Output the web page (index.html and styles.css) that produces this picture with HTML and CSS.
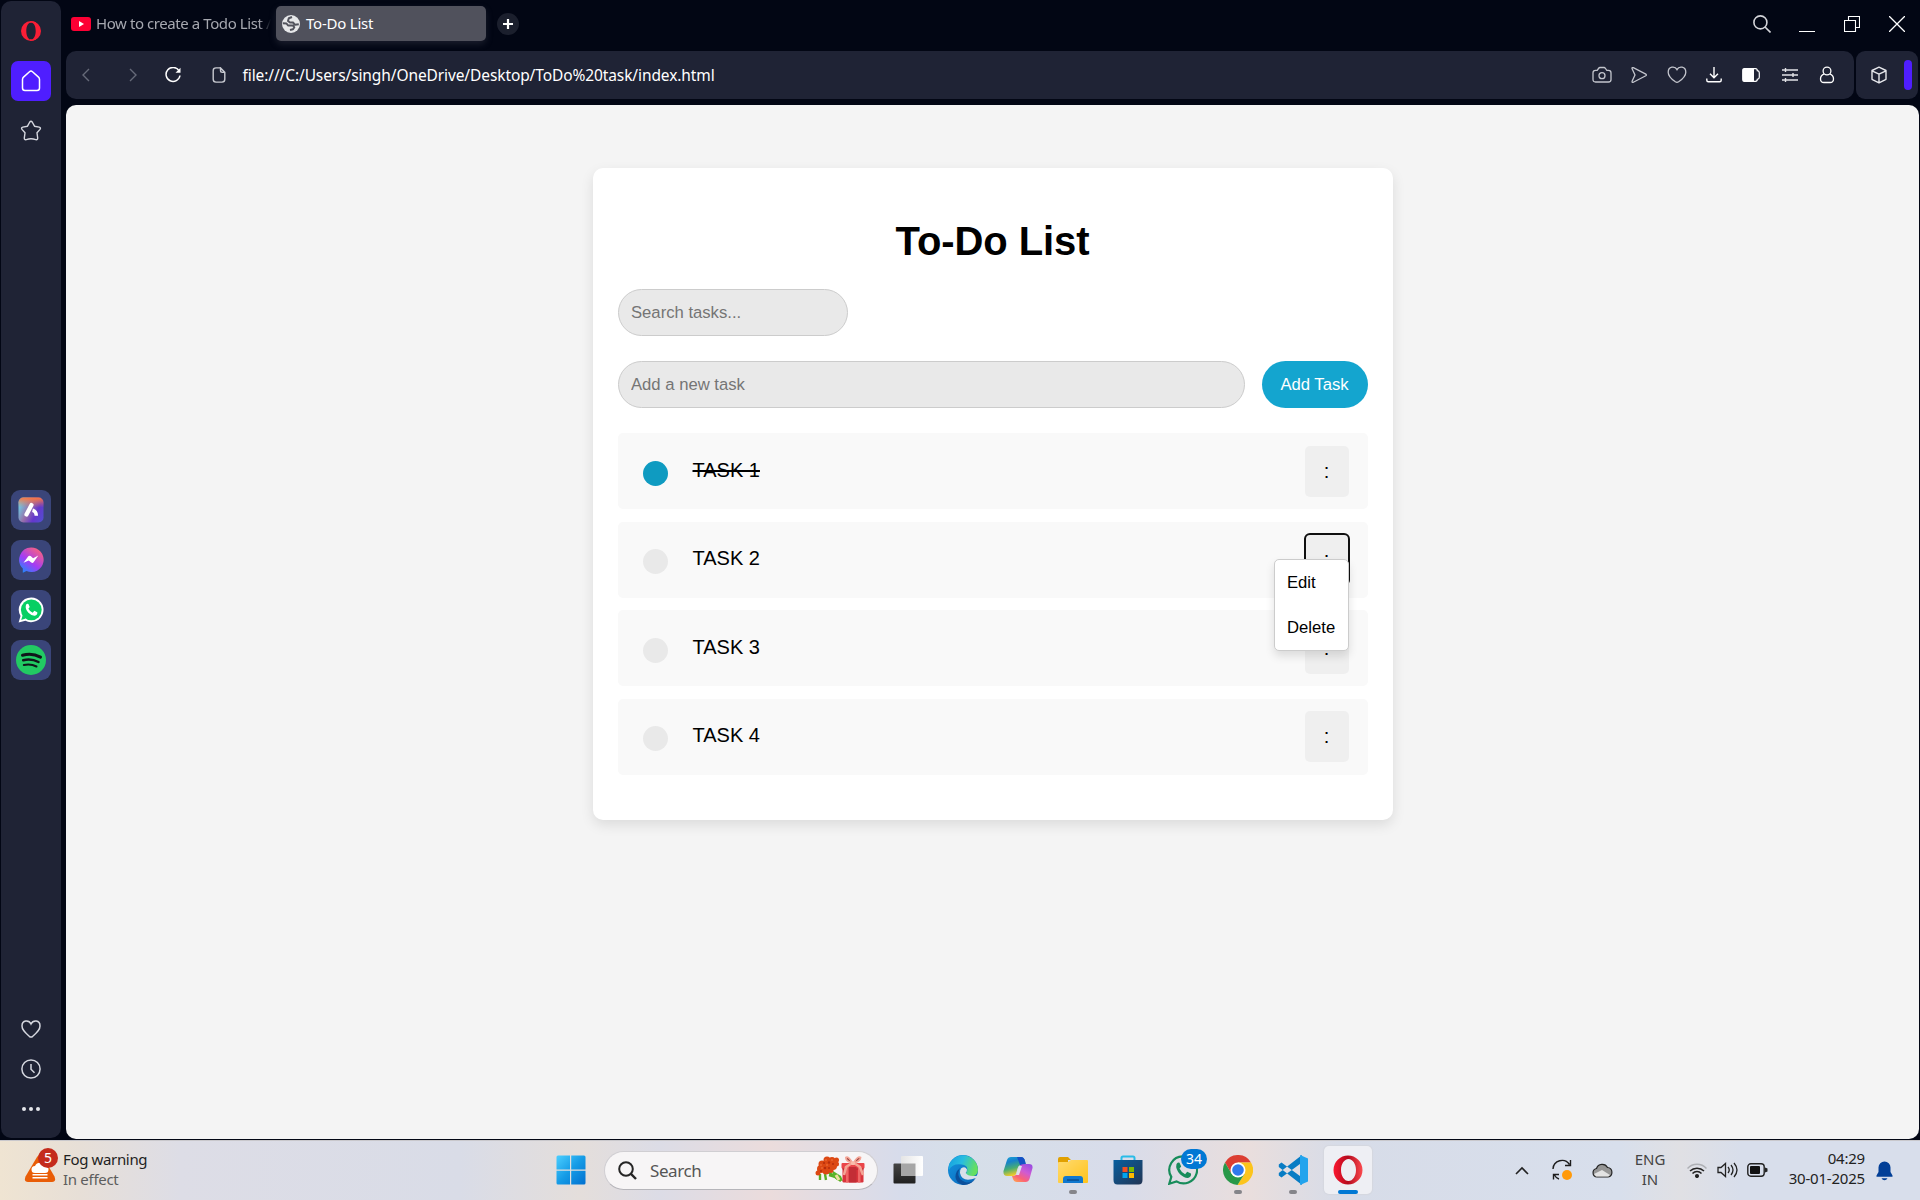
FILE: index.html
```html
<!DOCTYPE html>
<html lang="en">
<head>
<meta charset="utf-8">
<title>To-Do List</title>
<link rel="stylesheet" href="styles.css">
</head>
<body>
<div class="browser">
  <aside class="sidebar">
    <svg class="opera-mark" width="20" height="20" viewBox="0 0 20 20"><path fill="#fa1e36" fill-rule="evenodd" d="M10 0a10 10 0 1 0 0 20a10 10 0 0 0 0-20zM10 1.400c2.900 0 4.700 3.900 4.700 8.600s-1.800 8.600-4.700 8.600s-4.700-3.900-4.700-8.600s1.800-8.600 4.700-8.600z"/><path d="M9 1.200q3-1.200 6 .9M9 18.800q3 1.200 6-.9" stroke="#fa1e36" fill="none"/></svg>
    <div class="side-button home"><svg width="20" height="22" viewBox="0 0 20 22" fill="none" stroke="#fff" stroke-width="1.500" stroke-linejoin="round"><path d="M1.500 9.500q0-1.500 1-2.400L8.500 1.700q1.500-1.300 3 0l6 5.400q1 .9 1 2.400v8.500q0 2.500-2.500 2.500H4q-2.500 0-2.500-2.500z"/></svg></div>
    <svg class="star" width="22" height="22" viewBox="0 0 22 22" fill="none" stroke="#d5d7df" stroke-width="1.400" stroke-linejoin="round"><path d="M9.800 2Q11 .4 12.200 2l2.300 4.200 4.700.9q2 .6.8 2.300l-3 3.400.7 5.200q0 2.200-2 1.600Q11 18 6.300 19.600q-2 .6-2-1.600l.7-5.200L2 9.400Q.8 7.700 2.800 7.100l4.700-.9z"/></svg>
    <div class="side-apps">
      <div class="side-button"><svg width="26" height="26" viewBox="0 0 26 26"><defs><linearGradient id="aria" x1="0" y1=".3" x2="1" y2=".8"><stop offset="0" stop-color="#6dd3e8"/><stop offset=".4" stop-color="#976ea9"/><stop offset=".7" stop-color="#6537cc"/><stop offset="1" stop-color="#554bd0"/></linearGradient><linearGradient id="ariatop" x1="0" y1="0" x2="0" y2="1"><stop offset="0" stop-color="#ff753e"/><stop offset=".4" stop-color="#e87557" stop-opacity="0"/></linearGradient></defs><rect x=".5" y=".5" width="25" height="25" rx="5" fill="url(#aria)"/><rect x=".5" y=".5" width="25" height="25" rx="5" fill="url(#ariatop)"/><path d="M13.500 8L8.500 17.500" stroke="#fff" stroke-width="4.200" stroke-linecap="round"/><path d="M14.500 13.200q3.800.9 3.800 5.600" stroke="#fff" stroke-width="3.500" fill="none"/></svg></div>
      <div class="side-button"><svg width="26" height="26" viewBox="0 0 26 26"><defs><linearGradient id="msg" x1=".1" y1="1" x2=".8" y2="0"><stop stop-color="#168fff"/><stop offset=".45" stop-color="#a43bf5"/><stop offset="1" stop-color="#ff6577"/></linearGradient></defs><path fill="url(#msg)" d="M13 .5a12.300 12.300 0 1 1-4.500 23.600L4.800 25.700V21.500A12.300 12.300 0 0 1 13 .5z"/><path fill="#fff" d="M5.500 15.800l4.800-6.500q1-1.200 2.300-.2l2.500 2.100 5.200-2.700-4.700 6.800q-1 1.200-2.300.2l-2.600-2z"/></svg></div>
      <div class="side-button"><svg width="26" height="26" viewBox="0 0 26 26"><path fill="#fff" d="M13.300.4a12.400 12.400 0 1 1-5.900 23.400L.6 25.500l1.900-6.500A12.400 12.400 0 0 1 13.300.4z"/><circle cx="13.300" cy="12.800" r="10.400" fill="#07cf63"/><path fill="#07cf63" d="M3.200 23l1.500-5 3 3.500z"/><path fill="#fff" d="M8 7.700q1-1.400 2.400-.8l1.300 3-1.300 1.800q1.500 2.900 4.300 4l1.600-1.900 3 1.500q.4 2.700-2.500 3.400-3 .3-6.400-3Q6.800 12 8 7.700z"/></svg></div>
      <div class="side-button"><svg width="30" height="30" viewBox="0 0 30 30"><circle cx="15" cy="15" r="15" fill="#22ca63"/><g fill="none" stroke="#10151a" stroke-linecap="round"><path d="M6.500 10.300q9.500-2.600 18 1.800" stroke-width="3"/><path d="M7.200 15.300q8-2 15.300 1.700" stroke-width="2.500"/><path d="M7.800 20q7-1.500 12.700 1.500" stroke-width="2"/></g></svg></div>
    </div>
    <div class="side-tools">
      <svg width="20" height="18" viewBox="0 0 20 18" fill="none" stroke="#d5d7df" stroke-width="1.500"><path d="M10 4C8-.2 1-.3 1 5.900 1 9.900 4 12.400 8.300 16.300q1.700 1.400 3.400 0C16 12.400 19 9.900 19 5.900 19-.3 12-.2 10 4z"/></svg>
      <svg width="20" height="20" viewBox="0 0 20 20" fill="none" stroke="#d5d7df" stroke-width="1.500"><circle cx="10" cy="10" r="9.100"/><path d="M10 5v5.200l3.500 3.500"/></svg>
      <svg width="20" height="6" viewBox="0 0 20 6" fill="#e4e5ea"><circle cx="3" cy="3" r="2"/><circle cx="10" cy="3" r="2"/><circle cx="17" cy="3" r="2"/></svg>
    </div>
  </aside>

  <div class="window">
    <header class="tabs">
      <div class="tab">
        <svg width="20" height="14" viewBox="0 0 20 14"><rect width="20" height="14" rx="3" fill="#fd0034"/><path fill="#fff" d="M8 4l5 3-5 3z"/></svg>
        <span class="tab-label first">How to create a Todo List /</span>
      </div>
      <div class="tab active">
        <svg width="18" height="18" viewBox="0 0 18 18"><circle cx="9" cy="9" r="9" fill="#e6e7e9"/><path fill="none" stroke="#52535d" stroke-width="2" stroke-linejoin="round" d="M.8 8.200l3.700.3L6 10.500h5l1.300 1.800-1.300 2-3 .7M10 2L6.800 3.300 6 6l2 1.500h3l2 2.300 3.800-.6"/></svg>
        <span class="tab-label second">To-Do List</span>
      </div>
      <div class="new-tab"><svg width="10" height="10" viewBox="0 0 10 10"><path d="M5 0v10M0 5h10" stroke="#fff" stroke-width="2.200"/></svg></div>
      <div class="window-controls">
        <svg width="18" height="18" viewBox="0 0 18 18" fill="none" stroke="#d3d4d9" stroke-width="1.600"><circle cx="7.400" cy="7.400" r="6.500"/><path d="M12 12l5.500 5.500"/></svg>
        <svg width="16" height="16" viewBox="0 0 16 16"><path d="M0 15.500h16" stroke="#fff"/></svg>
        <svg width="16" height="16" viewBox="0 0 16 16" fill="none" stroke="#fff" stroke-width="1.100"><path d="M.5 4.500h11v11H.5zM4.500 4.500v-4h11v11h-4"/></svg>
        <svg width="16" height="16" viewBox="0 0 16 16"><path d="M0 0l16 16M16 0L0 16" stroke="#fff" stroke-width="1.300"/></svg>
      </div>
    </header>

    <div class="toolbar">
      <div class="address-bar">
        <div class="nav">
          <svg width="8" height="14" viewBox="0 0 8 14" fill="none" stroke="#666a79" stroke-width="1.400"><path d="M7 1L1 7l6 6"/></svg>
          <svg width="8" height="14" viewBox="0 0 8 14" fill="none" stroke="#666a79" stroke-width="1.400"><path d="M1 1l6 6-6 6"/></svg>
          <svg width="16" height="16" viewBox="0 0 16 16"><path d="M14 3.700A7 7 0 1 0 15 8.500" fill="none" stroke="#fff" stroke-width="1.500"/><path fill="#fff" d="M15.500.8v5h-5z"/></svg>
          <svg width="14" height="16" viewBox="0 0 14 16" fill="none" stroke="#c7c9d0" stroke-width="1.400"><path d="M8.500.9H4Q1.200.9 1.200 3.700v8.600q0 2.800 2.800 2.800h6q2.800 0 2.800-2.800V5.400L8.500.9v2.700q0 1.800 1.800 1.800h2.500"/></svg>
        </div>
        <span class="url">file:///C:/Users/singh/OneDrive/Desktop/ToDo%20task/index.html</span>
        <div class="actions">
          <svg width="20" height="18" viewBox="0 0 20 18" fill="none" stroke="#c3c5cd" stroke-width="1.300"><path d="M3.500 4.300h1.700L6.500 2.500Q7.200 1.500 8 1.500h4q.8 0 1.500 1l1.300 1.800h1.700q2.500 0 2.500 2.500v6.700q0 2.500-2.500 2.500h-13Q1 16 1 13.500V6.800q0-2.500 2.500-2.500z"/><circle cx="10" cy="9.700" r="3"/></svg>
          <svg width="18" height="18" viewBox="0 0 18 18" fill="none" stroke="#c3c5cd" stroke-width="1.300" stroke-linejoin="round"><path d="M2 2.500q0-1.300 1.300-.8l12.500 6.400q1.200.8 0 1.600L3.300 16.300q-1.500.5-1.200-1L5 9z"/></svg>
          <svg width="20" height="18" viewBox="0 0 20 18" fill="none" stroke="#c3c5cd" stroke-width="1.300"><path d="M10 3.600C8-.2 1.200.2 1.200 6.200c0 3.800 3 6.700 7.200 9.600q1.600 1 3.200 0c4.200-2.900 7.200-5.800 7.200-9.600C18.800.2 12-.2 10 3.600z"/></svg>
          <svg width="16" height="16" viewBox="0 0 16 16" fill="none" stroke="#fff" stroke-width="1.400"><path d="M8 0v10.500M4 6.700l4 4 4-4M.8 11.500v1.800q0 1.500 1.500 1.500h11.400q1.500 0 1.500-1.500v-1.800"/></svg>
          <svg class="battery-saver" width="18" height="14" viewBox="0 0 18 14"><path d="M2.200.7h11.300q1.800 0 1.800 2 2 .3 2 2v4.600q0 1.700-2 2 0 2-1.800 2H2.200Q.7 13.300.7 11.300V2.700Q.7.700 2.200.7z" fill="none" stroke="#fff" stroke-width="1.200"/><path fill="#fff" d="M1 1h11v12H1z"/></svg>
          <svg width="16" height="14" viewBox="0 0 16 14" stroke="#e2e3e7" stroke-width="1.400"><path d="M0 2h16M0 7h16M0 12h16M3.500 0v4M11 5v4M3.500 10v4"/></svg>
          <svg width="16" height="18" viewBox="0 0 16 18" fill="none" stroke="#fff" stroke-width="1.300"><circle cx="8" cy="5" r="3.900"/><path d="M5.200 7.900Q1.500 9.500 1.500 13q0 3.500 3.500 3.500h6q3.500 0 3.500-3.500 0-3.500-3.700-5.100"/></svg>
        </div>
      </div>
      <div class="panel-toggle">
        <svg width="18" height="18" viewBox="0 0 18 18" fill="none" stroke="#e6e7ec" stroke-width="1.400" stroke-linejoin="round"><path d="M9 1.200l7 3.300v8.800l-7 3.500-7-3.500V4.500zM2 4.800l7 3.300 7-3.300M9 8.100v8.400"/></svg>
        <span class="accent-handle"></span>
      </div>
    </div>

    <main class="page">
      <section class="card">
        <h1>To-Do List</h1>
        <input class="field search-tasks" type="text" placeholder="Search tasks...">
        <div class="add-row">
          <input class="field new-task" type="text" placeholder="Add a new task">
          <button class="add-button">Add Task</button>
        </div>
        <ul class="tasks">
          <li class="task"><span class="check done"></span><span class="name struck">TASK 1</span><button class="more">:</button></li>
          <li class="task"><span class="check"></span><span class="name">TASK 2</span><button class="more focused">:</button>
            <div class="menu"><div class="item">Edit</div><div class="item">Delete</div></div>
          </li>
          <li class="task"><span class="check"></span><span class="name">TASK 3</span><button class="more">:</button></li>
          <li class="task"><span class="check"></span><span class="name">TASK 4</span><button class="more">:</button></li>
        </ul>
      </section>
    </main>
  </div>
</div>

<footer class="taskbar">
  <div class="weather">
    <div class="weather-icon">
      <svg width="32" height="30" viewBox="0 0 32 30"><path d="M13 4Q16-1 19 4l11.500 19.500Q32.500 29 28 29H4Q-.500 29 1.500 23.500z" fill="#e95d07"/><path fill="#fff" d="M11 20a3.500 3.500 0 0 1 0-7 5.500 5.500 0 0 1 10 0 3.500 3.500 0 0 1 0 7z"/><path d="M8.500 21.700h15M8.500 24.700h15" stroke="#fff" stroke-width="1.500"/></svg>
      <span class="alert-count">5</span>
    </div>
    <div class="weather-text"><span class="fog">Fog warning</span><span class="effect">In effect</span></div>
  </div>

  <div class="start">
    <svg width="30" height="30" viewBox="0 0 30 30"><defs><linearGradient id="win" x2="1" y2="1"><stop stop-color="#4ccfff"/><stop offset=".5" stop-color="#159be6"/><stop offset="1" stop-color="#0070d0"/></linearGradient></defs><path fill="url(#win)" d="M.5 2q0-1.500 1.500-1.500h12v14H.5zM15.200.5h12.800q1.500 0 1.500 1.500v12.500H15.200zM.5 15.700H14v13.800H2q-1.500 0-1.500-1.500zM15.200 15.700h14.300V28q0 1.500-1.500 1.500H15.200z"/></svg>
  </div>
  <div class="search-box">
    <svg width="19" height="19" viewBox="0 0 19 19" fill="none" stroke="#252525" stroke-width="2"><circle cx="8" cy="8" r="6.800"/><path d="M12.700 12.700l5.300 5.300" stroke-width="2.400"/></svg>
    <span class="search-label">Search</span>
    <svg class="gift" width="50" height="28" viewBox="0 0 50 28">
      <path d="M5 18v6M10 18l1 6M13 16l13 9M14 19l10 3" stroke="#58ad24" stroke-width="2.400"/><path d="M18 15l8 5 2 5-6-1-5-4z" fill="#59b52a"/><path d="M21 19l3 5" stroke="#efe0a0" stroke-width="3"/>
      <g fill="#dc4813"><circle cx="7" cy="8" r="3.500"/><circle cx="12" cy="4" r="3.500"/><circle cx="17" cy="4.500" r="3.500"/><circle cx="21.500" cy="4" r="2.500"/><circle cx="12" cy="10" r="5.500"/><circle cx="18" cy="10" r="4"/><circle cx="21.500" cy="8" r="2.500"/><circle cx="6" cy="13" r="4"/><circle cx="11" cy="15" r="3.500"/><circle cx="16" cy="14.500" r="2.500"/><circle cx="3" cy="17" r="2.500"/></g>
      <g fill="#b52d0c"><circle cx="9" cy="7" r="1"/><circle cx="14" cy="6.500" r="1.200"/><circle cx="18" cy="8" r="1"/><circle cx="10" cy="12" r="1.200"/><circle cx="6" cy="15" r="1"/><circle cx="14" cy="12" r="1"/></g>
      <g fill="#f47a45"><circle cx="11" cy="4" r=".8"/><circle cx="6" cy="9" r=".8"/><circle cx="17" cy="4" r=".8"/><circle cx="12" cy="9" r=".8"/><circle cx="7" cy="12" r=".8"/></g>
      <rect x="27.500" y="11" width="21" height="15.500" rx="1.200" fill="#d9333b"/><path fill="#b4242e" d="M27.500 12h21v1.500h-21z"/><rect x="26.500" y="7" width="23" height="5.500" rx="1" fill="#ea4549"/>
      <path d="M34 11h7.500v15.500H34z" fill="#c32d36"/><path d="M31 11h2.500v15.500H31zM43 11h2.500v15.500H43z" fill="#ef6766"/><path d="M37.500 7Q33-.5 31 1.500 30.500 5 37.500 7zM38.500 7Q43-.5 45.500 1.500 45.500 5 38.500 7z" fill="#8e3838" stroke="#f4a495" stroke-width="1.800"/><path d="M37 7l-6 4-2 8M39 7l6 4 3 8" fill="none" stroke="#f4a495" stroke-width="2.600"/><rect x="36" y="5.500" width="4" height="3.500" rx="1" fill="#f9bcab"/>
    </svg>
  </div>
  <nav class="apps">
    <div class="app"><svg width="30" height="30" viewBox="0 0 30 30"><defs><linearGradient id="tv" x2="0" y2="1"><stop stop-color="#454545"/><stop offset="1" stop-color="#202020"/></linearGradient><linearGradient id="tv2" x2="1"><stop stop-color="#e5e5e5"/><stop offset="1" stop-color="#fff"/></linearGradient></defs><rect x=".5" y="8.500" width="22" height="20" rx="1" fill="url(#tv)"/><rect x="8" y="1" width="22" height="20" rx="1" fill="url(#tv2)"/><path fill="#a6a6a6" d="M8 8.500h14.500V21H8z"/></svg></div>
    <div class="app"><svg width="30" height="30" viewBox="0 0 30 30"><defs><linearGradient id="e1" x2="1" y2=".3"><stop stop-color="#159fe0"/><stop offset=".5" stop-color="#28bde0"/><stop offset="1" stop-color="#64df61"/></linearGradient><linearGradient id="e2" x2="1" y2="1"><stop stop-color="#1595df"/><stop offset="1" stop-color="#0864b8"/></linearGradient></defs><circle cx="15" cy="15" r="15" fill="url(#e2)"/><path fill="url(#e1)" d="M1 10A15 15 0 0 1 30 15q-.5 6.500-7.500 6.500-6.500-1-4-4 3-7-5-8Q4 8.500 1 15z"/><path fill="#0b4f9a" d="M12 13q-5 10 5 14 6 2 11-4A15 15 0 0 1 15 30Q4 26 9 16z"/><path fill="#d8dfe9" d="M13 13.500q4-3 6 1 0 2-1.300 3.500 2.500 4.300 12.300 2.500L28 23q-14 5-16-5-.2-3 1-4.500z"/></svg></div>
    <div class="app"><svg width="30" height="28" viewBox="0 0 30 28"><defs><linearGradient id="c1" x2=".3" y2="1"><stop stop-color="#1ca7d8"/><stop offset=".3" stop-color="#1681cb"/><stop offset=".65" stop-color="#48ad73"/><stop offset="1" stop-color="#f2cb28"/></linearGradient><linearGradient id="c2" x1=".8" x2=".2" y2="1"><stop stop-color="#9b4de0"/><stop offset=".4" stop-color="#ce5bd4"/><stop offset=".75" stop-color="#fa6179"/><stop offset="1" stop-color="#ff9b54"/></linearGradient></defs><path fill="url(#c1)" d="M8 1h10q3 0 4 4l1 4h-5q-2.500 0-3.500 3.500L13 18q-.8 2-3 2H4q-4 0-3.500-5L4 4q1-3 4-3z"/><path fill="#1551c5" d="M14 1h4q3 0 4 4l1 4h-6z"/><path fill="url(#c2)" d="M22 8h4q4 0 3.500 4l-3 11q-1 3-4 3H14q-3 0-4-3l-1-3h2q2 0 3-3l2-6q1-3 6-3z"/><path fill="#dce0eb" d="M16 10h3l-3 9h-3z"/></svg></div>
    <div class="app running"><svg width="30" height="28" viewBox="0 0 30 28"><defs><linearGradient id="fo" x2="1" y2="1"><stop stop-color="#ffda70"/><stop offset="1" stop-color="#ffc31a"/></linearGradient></defs><path fill="#e1a000" d="M0 3q0-2 2-2h8l3 3h-3v5H0z"/><path fill="url(#fo)" d="M0 7q0-1 1-1h9l3-2h16q1 0 1 1v21q0 1-1 1H1q-1 0-1-1z"/><path fill="#1078cf" d="M5 27v-4q0-3 3-3h14q3 0 3 3v4z"/><path d="M9 24h12" stroke="#084e91" stroke-width="1.500"/></svg></div>
    <div class="app"><svg width="30" height="30" viewBox="0 0 30 30"><defs><linearGradient id="st" x2="1" y2="1"><stop stop-color="#085f9f"/><stop offset="1" stop-color="#223554"/></linearGradient></defs><path d="M8.500 6V3q0-1.500 1.500-1.500h10q1.500 0 1.500 1.500v3" fill="none" stroke="#29bce8" stroke-width="2"/><path fill="url(#st)" d="M.5 5h29v20q0 4.500-4 4.500h-21q-4 0-4-4.500z"/><path fill="#f25022" d="M9.500 12h5v5h-5z"/><path fill="#7fba00" d="M16 12h5v5h-5z"/><path fill="#00a4ef" d="M9.500 18h5v5h-5z"/><path fill="#ffb900" d="M16 18h5v5h-5z"/></svg></div>
    <div class="app"><svg width="30" height="30" viewBox="0 0 30 30"><path d="M15.500 1.400a13.500 13.500 0 1 1-7 25l-7.200 2.300 2-6.800a13.500 13.500 0 0 1 12.200-20.500z" fill="none" stroke="#178c5a" stroke-width="2.200"/><path fill="#178c5a" d="M8.500 9q1.500-2 3-1.300l1.700 3.800-1.700 2.100q1.700 3.700 5.600 5.600l2.100-2.400 3.800 1.700q.7 3.500-3 4.400-3.800.2-8-3.700Q7.200 14 8.500 9z"/></svg><span class="unread">34</span></div>
    <div class="app running"><svg width="30" height="30" viewBox="0 0 30 30"><path fill="#dc3e32" d="M2 7.500A15 15 0 0 1 28 7.500H15L8.500 18.800z"/><path fill="#fcc41c" d="M28 7.500A15 15 0 0 1 14.500 30L21.500 18.800 15 7.500z"/><path fill="#289848" d="M2 7.500l6.500 11.300q5 5 13 0L14.500 30A15 15 0 0 1 2 7.500z"/><circle cx="15" cy="15" r="7.500" fill="#fff"/><circle cx="15" cy="15" r="5.800" fill="#3079ed"/></svg></div>
    <div class="app running"><svg width="30" height="30" viewBox="0 0 30 30"><path fill="#087cc4" d="M.8 9.500l2.700-2 20.500 15V30L.8 12zM.8 20.500l2.700 2L24 7.500V0L.8 18z"/><path fill="#23a4ed" d="M22 0l8 3.500v23L22 30z"/></svg></div>
    <div class="app current"><svg width="30" height="30" viewBox="0 0 30 30"><defs><linearGradient id="op" x2="1" y2="0"><stop stop-color="#fb1830"/><stop offset=".5" stop-color="#b40a1d"/><stop offset="1" stop-color="#fb4a4f"/></linearGradient></defs><path fill="url(#op)" fill-rule="evenodd" d="M15 .5a14.500 14.500 0 1 0 0 29a14.500 14.500 0 0 0 0-29zM15.500 4c4.300 0 7.500 5 7.500 11s-3.200 11-7.500 11-7.500-5-7.500-11 3.200-11 7.500-11z"/></svg></div>
  </nav>

  <div class="tray">
    <svg class="chevron" width="14" height="9" viewBox="0 0 14 9"><path d="M1 8l6-6 6 6" fill="none" stroke="#222" stroke-width="1.600"/></svg>
    <svg class="sync" width="20" height="22" viewBox="0 0 20 22"><g fill="none" stroke="#1d1d1d" stroke-width="1.400"><path d="M1 10A9 9 0 0 1 17.500 5.500M18.500 1v5.500H13M7 20Q4 19 2 15.500M1.500 20.500v-5H7"/></g><circle cx="15" cy="16" r="5" fill="#ff9a0b"/></svg>
    <svg class="onedrive" width="21" height="15" viewBox="0 0 21 15"><path d="M5 14a4.300 4.300 0 0 1-.5-8.500A6 6 0 0 1 15.500 4.500 4.800 4.800 0 0 1 16 14z" fill="#969696" stroke="#252525" stroke-width="1.200"/><path fill="#e3e3e3" d="M2 11l8-4 8 5-1.500 1.500H4z"/></svg>
    <div class="language"><span>ENG</span><span>IN</span></div>
    <svg class="wifi" width="20" height="16" viewBox="0 0 20 16" fill="none" stroke="#222" stroke-width="1.500"><path d="M.5 6.500a13 13 0 0 1 19 0" stroke="#aeb0b5"/><path d="M3 9a10 10 0 0 1 14 0M5.500 11.500a6.300 6.300 0 0 1 9 0"/><circle cx="10" cy="14" r="1.300" fill="#222"/></svg>
    <svg class="volume" width="21" height="18" viewBox="0 0 21 18" fill="none" stroke="#222" stroke-width="1.300"><path d="M1 6.500h3l4.500-4v13l-4.500-4H1zM11 6q2.500 3 0 6M14 4q4 5 0 10M17 2q6 7 0 14"/></svg>
    <svg class="battery" width="21" height="14" viewBox="0 0 21 14"><rect x=".8" y=".8" width="16.400" height="12.400" rx="3" fill="none" stroke="#222" stroke-width="1.400"/><rect x="3" y="3" width="10" height="8" rx="1" fill="#111"/><path fill="#222" d="M18 4.500l2.500 1v3l-2.500 1z"/></svg>
    <div class="clock"><span class="time">04:29</span><span class="date">30-01-2025</span></div>
    <svg class="bell" width="17" height="20" viewBox="0 0 17 20" fill="#023f97"><path d="M8.500.5A6 6 0 0 0 2.500 6.500V11L.5 14.500v1.200h16v-1.200L14.500 11V6.500a6 6 0 0 0-6-6zM5.500 17.200h6q-1 2-3 2t-3-2z"/></svg>
  </div>
</footer>
</body>
</html>
```
FILE: styles.css
```css
* { box-sizing: border-box; }
body {
  margin: 0;
  width: 1920px;
  height: 1200px;
  overflow: hidden;
  background: #020614;
  font-family: "Noto Sans", sans-serif;
}
svg { display: block; flex: none; }

.browser { display: flex; height: 1140px; }

/* Sidebar */
.sidebar {
  display: flex;
  flex-direction: column;
  align-items: center;
  width: 60px;
  height: 1137px;
  margin: 1px 5px 0 1px;
  border-radius: 10px;
  background: #1f2335;
}
.opera-mark { margin-top: 20px; }
.side-button {
  display: flex;
  align-items: center;
  justify-content: center;
  width: 40px;
  height: 40px;
  border-radius: 9px;
  background: #3a4579;
}
.side-button.home { margin-top: 20px; border-radius: 7px; background: #4f1eff; }
.star { margin-top: 19px; }
.side-apps { display: flex; flex-direction: column; gap: 10px; margin-top: 348px; }
.side-tools {
  display: flex;
  flex-direction: column;
  align-items: center;
  margin-top: auto;
  margin-bottom: 26px;
}
.side-tools svg:nth-child(2) { margin: 21px 0 27px; }

/* Window chrome */
.window { display: flex; flex-direction: column; width: 1853px; }
.tabs { display: flex; height: 51px; padding: 6px 14px 0 5px; }
.tab { display: flex; align-items: center; width: 205px; height: 35px; }
.tab-label { position: relative; top: -1px; white-space: nowrap; font-size: 15px; }
.tab-label.first {
  margin-left: 5px;
  color: #a6a8b0;
  letter-spacing: -.42px;
  -webkit-mask-image: linear-gradient(90deg, #000 93%, transparent);
  mask-image: linear-gradient(90deg, #000 93%, transparent);
}
.tab.active {
  width: 210px;
  padding-left: 6px;
  border-radius: 5px;
  background: #50515c;
  box-shadow: 0 3px 7px #5555664d;
}
.tab-label.second { margin-left: 6px; color: #fff; letter-spacing: -.22px; }
.new-tab {
  display: flex;
  align-items: center;
  justify-content: center;
  width: 22px;
  height: 22px;
  margin: 7px 0 0 11px;
  border-radius: 50%;
  background: #1b1f2d;
}
.window-controls { display: flex; gap: 29px; height: 16px; margin: 10px 0 0 auto; }
.window-controls svg:first-child { margin: -1px -1px 0 0; }

.toolbar { display: flex; gap: 2px; height: 48px; }
.address-bar {
  display: flex;
  align-items: center;
  width: 1788px;
  padding: 0 8px 0 16px;
  border-radius: 10px;
  background: #1f2335;
}
.nav { display: flex; align-items: center; }
.nav svg:nth-child(2) { margin-left: 38.500px; }
.nav svg:nth-child(3) { margin-left: 28px; }
.nav svg:nth-child(4) { margin-left: 31px; }
.url { margin-left: 17px; color: #fff; font-size: 15.500px; letter-spacing: -.1px; white-space: nowrap; }
.actions { display: grid; grid-template-columns: repeat(7, 37.600px); place-items: center; margin-left: auto; }
.battery-saver { margin: -1px 1px 0 -1px; }
.panel-toggle {
  display: flex;
  align-items: center;
  justify-content: flex-end;
  gap: 16px;
  width: 62px;
  padding-right: 6px;
  border-radius: 9px;
  background: #1f2335;
}
.accent-handle { width: 8px; height: 30px; border-radius: 4px; background: #4f1eff; }

/* To-do page */
.page {
  height: 1034px;
  margin-top: 6px;
  padding-top: 63px;
  border-radius: 10px;
  background: #f4f4f4;
  font-family: "Liberation Sans", Arial, sans-serif;
}
.card {
  width: 800px;
  height: 652px;
  margin: 0 auto;
  padding: 50px 25px 0;
  border-radius: 10px;
  background: #fff;
  box-shadow: 0 5px 12.500px rgba(0, 0, 0, .1);
}
.card h1 { margin: 0 0 25px; font-size: 40px; line-height: 46px; letter-spacing: -.1px; text-align: center; }
.field {
  display: block;
  height: 47px;
  padding: 0 12.500px;
  border: 1px solid #ccc;
  border-radius: 25px;
  background: #e9e9e9;
  font: 16.670px "Liberation Sans", Arial, sans-serif;
}
.field::placeholder { color: #757575; }
.search-tasks { width: 230px; }
.add-row { display: flex; gap: 17px; margin-top: 25px; }
.new-task { width: 627px; }
.add-button {
  width: 106px;
  height: 47px;
  padding: 0;
  border: 0;
  border-radius: 25px;
  background: #14a5cf;
  color: #fff;
  font: 16.670px "Liberation Sans", Arial, sans-serif;
}
.tasks { display: flex; flex-direction: column; gap: 12.400px; margin: 25px 0 0; padding: 0; list-style: none; }
.task {
  position: relative;
  display: flex;
  align-items: center;
  height: 76.200px;
  padding: 0 19px 0 25px;
  border-radius: 5px;
  background: #f9f9f9;
}
.check { width: 25px; height: 25px; margin-top: 4px; border-radius: 50%; background: #e9e9e9; }
.check.done { background: #0f9bc1; }
.name { margin: 0 0 2px 25px; font-size: 20px; }
.name.struck { text-decoration: line-through; }
.more {
  width: 44px;
  height: 51px;
  margin-left: auto;
  padding: 0;
  border: 0;
  border-radius: 5px;
  background: #efefef;
  color: #000;
  font: 20px "Liberation Sans", Arial, sans-serif;
}
.more.focused { outline: 2px solid #101010; outline-offset: -1px; }
.menu {
  position: absolute;
  top: 37.500px;
  right: 19px;
  z-index: 2;
  width: 75px;
  height: 92px;
  border: 1px solid #ccc;
  border-radius: 5px;
  background: #fff;
  box-shadow: 0 5px 10px rgba(0, 0, 0, .12);
}
.item { padding-left: 12.500px; font-size: 16.670px; line-height: 45px; }

/* Taskbar */
.taskbar {
  display: flex;
  align-items: center;
  height: 60px;
  border-top: 1px solid #c9c8cc;
  background: linear-gradient(90deg, #efe4d2 0, #e7dfd7 80px, #dddde6 180px, #d9dce7 460px, #e4dedb 580px, #dcdce6 660px, #ebdcdc 770px, #d7dceb 900px, #d6dfe9 960px, #d8dcea 1120px, #e9dedd 1250px, #d7dce8 1340px, #d8dfec 1620px, #e0e0e4 1680px, #d8deeb 1740px, #d8deeb 100%);
}
.weather { display: flex; width: 556px; padding-left: 24px; }
.weather-icon { position: relative; padding-top: 2px; }
.alert-count {
  position: absolute;
  top: -3px;
  left: 14px;
  width: 20px;
  height: 20px;
  border-radius: 50%;
  background: #c42b1c;
  color: #fff;
  font-size: 14px;
  line-height: 20px;
  text-align: center;
}
.weather-text { display: flex; flex-direction: column; margin: -2px 0 2px 7px; color: #1f1f1f; font-size: 15px; line-height: 20px; }
.effect { color: #5d5d5d; letter-spacing: -.3px; }
.fog { letter-spacing: -.35px; }
.search-box {
  display: flex;
  align-items: center;
  width: 274px;
  height: 39px;
  margin: 0 0 1px 18px;
  padding: 0 12px 0 13px;
  border: 1px solid #d0ced2;
  border-bottom-color: #b6b5ba;
  border-radius: 20px;
  background: #f7f5f6;
}
.search-label { margin-left: 13px; color: #555; font-size: 17px; letter-spacing: -.4px; }
.gift { margin-left: auto; }
.apps { display: flex; margin: 0 0 1px 2px; }
.start { margin-bottom: 1px; }
.app { position: relative; display: flex; align-items: center; justify-content: center; width: 55px; height: 48px; }
.app svg { position: relative; }
.running::after, .current::after {
  content: "";
  position: absolute;
  bottom: 0;
  left: 23.500px;
  width: 8px;
  height: 4px;
  border-radius: 2px;
  background: #85858a;
}
.current::before { content: ""; position: absolute; inset: 0 3.500px; border-radius: 5px; background: #eeeff4; box-shadow: 0 0 1px 1px #d5d7df; }
.current::after { left: 17.500px; width: 20px; background: #0078d4; }
.unread {
  position: absolute;
  top: 3px;
  left: 26px;
  width: 26px;
  height: 20px;
  border-radius: 10px;
  background: #0078d4;
  color: #fff;
  font-size: 14px;
  line-height: 20px;
  text-align: center;
}
.tray { display: flex; align-items: center; margin: 0 0 1px 140px; color: #222; font-size: 15px; line-height: 20.500px; }
.sync { margin-left: 23px; }
.onedrive { margin-left: 20px; }
.language { display: flex; flex-direction: column; align-items: center; width: 30px; margin: -1px 0 1px 22px; color: #444; }
.wifi { margin-left: 22px; }
.volume { margin-left: 10px; }
.battery { margin-left: 9px; }
.clock { display: flex; flex-direction: column; align-items: flex-end; width: 80px; margin: -2px 0 2px 17px; line-height: 20px; }
.date, .time { white-space: nowrap; letter-spacing: -.2px; }
.bell { margin: 1px 0 0 11px; }
```
